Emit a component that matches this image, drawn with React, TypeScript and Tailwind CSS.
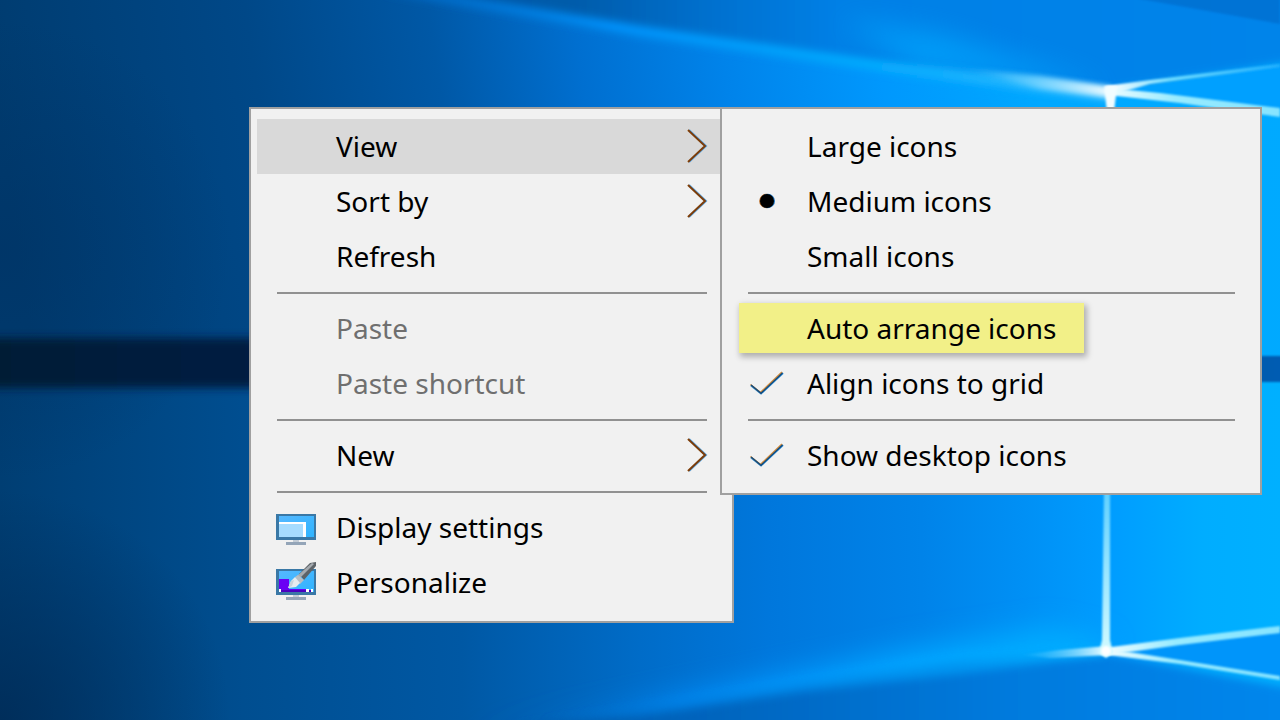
import type { ReactNode } from "react";

function Wallpaper() {
  return (
    <svg
      className="absolute inset-0 h-full w-full"
      viewBox="0 0 1280 720"
      preserveAspectRatio="xMidYMid slice"
      aria-hidden="true"
    >
      <defs>
        <linearGradient id="base" x1="0" y1="120" x2="1280" y2="-60" gradientUnits="userSpaceOnUse">
          <stop offset="0" stopColor="#003c70" />
          <stop offset="0.2" stopColor="#004888" />
          <stop offset="0.34" stopColor="#0058a6" />
          <stop offset="0.45" stopColor="#006fd0" />
          <stop offset="0.56" stopColor="#0083ea" />
          <stop offset="0.68" stopColor="#0098fd" />
          <stop offset="0.8" stopColor="#00a8ff" />
          <stop offset="1" stopColor="#00aaff" />
        </linearGradient>
        <linearGradient id="floor" x1="0" y1="0" x2="1280" y2="0" gradientUnits="userSpaceOnUse">
          <stop offset="0" stopColor="#003e73" />
          <stop offset="0.19" stopColor="#004e90" />
          <stop offset="0.36" stopColor="#0058a4" />
          <stop offset="0.5" stopColor="#006cc8" />
          <stop offset="0.6" stopColor="#0077dc" />
          <stop offset="0.72" stopColor="#0083e9" />
          <stop offset="0.8" stopColor="#0090f5" />
          <stop offset="0.87" stopColor="#009dff" />
          <stop offset="0.94" stopColor="#00adff" />
          <stop offset="1" stopColor="#00b0ff" />
        </linearGradient>
        <linearGradient id="sky" x1="400" y1="0" x2="1280" y2="0" gradientUnits="userSpaceOnUse">
          <stop offset="0" stopColor="#0052a0" />
          <stop offset="0.2" stopColor="#005cab" />
          <stop offset="0.35" stopColor="#0070ce" />
          <stop offset="0.5" stopColor="#0080e6" />
          <stop offset="1" stopColor="#0084ea" />
        </linearGradient>
        <linearGradient id="under" x1="500" y1="0" x2="1280" y2="0" gradientUnits="userSpaceOnUse">
          <stop offset="0" stopColor="#0059a8" />
          <stop offset="0.3" stopColor="#0066c0" />
          <stop offset="0.65" stopColor="#007add" />
          <stop offset="1" stopColor="#0086ec" />
        </linearGradient>
        <linearGradient id="beamTop" x1="400" y1="0" x2="1110" y2="90" gradientUnits="userSpaceOnUse">
          <stop offset="0" stopColor="#0077dc" stopOpacity="0.5" />
          <stop offset="0.3" stopColor="#0094ff" />
          <stop offset="0.65" stopColor="#00aeff" />
          <stop offset="0.85" stopColor="#2cbcff" />
          <stop offset="1" stopColor="#9ae4ff" />
        </linearGradient>
        <linearGradient id="beamLow" x1="450" y1="720" x2="1105" y2="650" gradientUnits="userSpaceOnUse">
          <stop offset="0" stopColor="#006fd0" stopOpacity="0" />
          <stop offset="0.35" stopColor="#008cf6" />
          <stop offset="0.7" stopColor="#00a4ff" />
          <stop offset="1" stopColor="#00b0ff" />
        </linearGradient>
        <linearGradient id="glintTop" x1="960" y1="0" x2="1110" y2="0" gradientUnits="userSpaceOnUse">
          <stop offset="0" stopColor="#55ccff" stopOpacity="0" />
          <stop offset="0.5" stopColor="#74d4ff" stopOpacity="0.8" />
          <stop offset="1" stopColor="#f0fbff" />
        </linearGradient>
        <linearGradient id="glintLow" x1="1020" y1="0" x2="1105" y2="0" gradientUnits="userSpaceOnUse">
          <stop offset="0" stopColor="#55ccff" stopOpacity="0" />
          <stop offset="1" stopColor="#e5faff" />
        </linearGradient>
        <linearGradient id="rayFade" x1="1110" y1="0" x2="1280" y2="0" gradientUnits="userSpaceOnUse">
          <stop offset="0" stopColor="#ffffff" />
          <stop offset="0.35" stopColor="#6fdcff" />
          <stop offset="1" stopColor="#22b0ff" />
        </linearGradient>
        <linearGradient id="rayBright" x1="1105" y1="0" x2="1280" y2="0" gradientUnits="userSpaceOnUse">
          <stop offset="0" stopColor="#f4feff" />
          <stop offset="0.4" stopColor="#98ebff" />
          <stop offset="1" stopColor="#86e4ff" />
        </linearGradient>
        <linearGradient id="bar" x1="0" y1="0" x2="1280" y2="0" gradientUnits="userSpaceOnUse">
          <stop offset="0" stopColor="#001a36" />
          <stop offset="0.2" stopColor="#001e42" />
          <stop offset="1" stopColor="#005cb2" />
        </linearGradient>
        <linearGradient id="pane" x1="0" y1="490" x2="0" y2="650" gradientUnits="userSpaceOnUse">
          <stop offset="0" stopColor="#5fd0ff" />
          <stop offset="1" stopColor="#d0faff" />
        </linearGradient>
        <radialGradient id="corner" cx="0" cy="720" r="230" gradientUnits="userSpaceOnUse">
          <stop offset="0" stopColor="#002a55" stopOpacity="0.8" />
          <stop offset="1" stopColor="#002a55" stopOpacity="0" />
        </radialGradient>
        <radialGradient id="dim" cx="0" cy="250" r="230" gradientUnits="userSpaceOnUse">
          <stop offset="0" stopColor="#003061" stopOpacity="0.5" />
          <stop offset="1" stopColor="#003061" stopOpacity="0" />
        </radialGradient>
        <filter id="soft1" x="-10%" y="-50%" width="120%" height="200%">
          <feGaussianBlur stdDeviation="1" />
        </filter>
        <filter id="soft2" x="-10%" y="-50%" width="120%" height="200%">
          <feGaussianBlur stdDeviation="2.5" />
        </filter>
        <filter id="soft4" x="-10%" y="-50%" width="120%" height="200%">
          <feGaussianBlur stdDeviation="4" />
        </filter>
        <filter id="soft14" x="-20%" y="-50%" width="140%" height="200%">
          <feGaussianBlur stdDeviation="14" />
        </filter>
      </defs>

      <rect width="1280" height="365" fill="url(#base)" />
      <rect y="365" width="1280" height="355" fill="url(#floor)" />
      <rect width="300" height="500" fill="url(#dim)" />
      <rect y="490" width="300" height="230" fill="url(#corner)" />

      <path d="M400 -20 L440 0 L620 32 L800 56 L1110 90 L1300 60 L1300 -20Z" fill="url(#sky)" filter="url(#soft4)" />
      <path d="M840 20 L940 36 L1110 88 L920 68Z" fill="#00a8ff" opacity="0.75" filter="url(#soft14)" />
      <path d="M1140 -1 L1280 24 L1280 -10 L1140 -10Z" fill="#006fd0" opacity="0.8" filter="url(#soft1)" />
      <path d="M380 -8 L440 -8 L640 26 L900 64 L1110 90 L1110 98 L890 72 L640 37Z" fill="url(#beamTop)" filter="url(#soft4)" />

      <path d="M1110 92 L1280 66 L1280 110Z" fill="#00a0ff" />
      <path d="M960 68 L1040 76 L1112 87 L1112 97 L1040 88Z" fill="url(#glintTop)" filter="url(#soft2)" />
      <path d="M1106 86 L1150 80 L1280 64 L1280 67 L1150 84 L1112 95Z" fill="url(#rayFade)" filter="url(#soft1)" />
      <path d="M1108 88 L1160 93 L1280 108 L1280 117 L1180 103 L1108 95Z" fill="url(#rayBright)" filter="url(#soft1)" />
      <path d="M1104 86 L1117 86 L1114 112 L1107 112Z" fill="#f2fdff" filter="url(#soft1)" />

      <path d="M440 740 L700 690 L900 650 L1050 628 L1105 642 L1105 660 L900 690 L560 724Z" fill="url(#beamLow)" filter="url(#soft14)" />
      <path d="M520 726 L640 708 L800 684 L960 662 L1105 654 L1300 690 L1300 750 L520 750Z" fill="url(#under)" filter="url(#soft4)" />
      <path d="M540 722 L800 676 L960 652 L1105 647 L1105 656 L960 674 L800 692 L640 716Z" fill="url(#beamLow)" opacity="0.6" filter="url(#soft4)" />
      <path d="M1105 651 L1280 629 L1280 679Z" fill="#0095fa" />
      <path d="M1020 655 L1060 650 L1108 646 L1108 655 L1050 658Z" fill="url(#glintLow)" filter="url(#soft1)" />
      <path d="M1104 648 L1180 638 L1280 626 L1280 633 L1180 645 L1108 655Z" fill="url(#rayBright)" filter="url(#soft1)" />
      <path d="M1104 648 L1180 660 L1280 676 L1280 680 L1180 664 L1108 655Z" fill="url(#rayBright)" filter="url(#soft1)" />
      <path d="M1104 490 L1110 490 L1110 640 L1113 653 L1106 658 L1099 653 L1102 640Z" fill="url(#pane)" filter="url(#soft1)" />
      <circle cx="1106" cy="651" r="5" fill="#ffffff" filter="url(#soft1)" />

      <rect x="-10" y="338" width="620" height="50" fill="url(#bar)" filter="url(#soft4)" />
      <rect x="700" y="356" width="600" height="26" fill="url(#bar)" filter="url(#soft1)" />
    </svg>
  );
}

function Chevron() {
  return (
    <svg className="h-9 w-6" viewBox="0 0 24 36" fill="none" aria-hidden="true">
      <path d="M5 2 L22 18 L5 34" stroke="#5aa9e8" strokeWidth="2" />
      <path d="M3 2 L20 18 L3 34" stroke="#fbe8c4" strokeWidth="1" />
      <path d="M4 2 L21 18 L4 34" stroke="#7a3c0c" strokeWidth="2" />
    </svg>
  );
}

function Check() {
  return (
    <svg className="h-6 w-9" viewBox="0 0 36 24" fill="none" aria-hidden="true">
      <path d="M2 14.5 L12 22.5 L34 2" stroke="#2f93dd" strokeWidth="2" />
      <path d="M1.5 13.5 L11.5 21.5 L33 1" stroke="#d18a3a" strokeWidth="1.6" />
      <path d="M2 14 L12 22.3 L33.5 2" stroke="#134a7c" strokeWidth="1.4" />
    </svg>
  );
}

function Dot() {
  return (
    <svg className="h-4 w-4" viewBox="0 0 16 16" aria-hidden="true">
      <circle cx="7.4" cy="8" r="7.2" fill="#b5651d" />
      <circle cx="8.8" cy="8" r="7.2" fill="#1c78c8" />
      <circle cx="8" cy="8" r="7" fill="#000000" />
    </svg>
  );
}

function MonitorBase() {
  return (
    <>
      <rect x="0" y="7" width="40" height="26" fill="#3a78a6" />
      <rect x="3" y="9" width="35" height="21" fill="url(#screen)" />
      <rect x="17" y="33" width="6" height="2" fill="#c3ccd6" />
      <rect x="10" y="35" width="20" height="3" fill="#94a5b8" />
      <defs>
        <linearGradient id="screen" x1="0" y1="0" x2="1" y2="1">
          <stop offset="0" stopColor="#55b8ff" />
          <stop offset="1" stopColor="#2fb4ff" />
        </linearGradient>
      </defs>
    </>
  );
}

function DisplayIcon() {
  return (
    <svg className="h-10 w-10" viewBox="0 0 40 40" aria-hidden="true">
      <MonitorBase />
      <rect x="3" y="15" width="27" height="15" fill="#ffffff" />
      <rect x="3" y="17" width="24" height="13" fill="#a6dcff" />
    </svg>
  );
}

function PersonalizeIcon() {
  return (
    <svg className="h-10 w-10" viewBox="0 0 40 40" aria-hidden="true">
      <MonitorBase />
      <path d="M3 17 H13 V27 H30 V30 H3Z" fill="#6a00f4" />
      <path d="M3 27 H5 V30 H3Z M30 27 H33 V30 H30Z M35 27 H37 V30 H35Z" fill="#ffffff" />
      <path d="M5 28 H30 V30 H5Z M33 28 H35 V30 H33Z" fill="#4a00c0" />
      <path d="M23 12 L34 1 L40 0 V4 L28 18Z" fill="#5d6368" />
      <path d="M21 14 L36 1 L38 2 L24 16Z" fill="#a6abb0" />
      <path d="M19 15 L22 13 L28 18 L24 22Z" fill="#b9bec3" />
      <path d="M19 15 L24 21 L20 25 L12 26 L15 19Z" fill="#e8ecef" />
      <path d="M12 26 L15 19 L18 18 L16 24Z" fill="#c9d4dc" />
    </svg>
  );
}

type ItemProps = {
  label: string;
  role?: "menuitem" | "menuitemradio" | "menuitemcheckbox";
  checked?: boolean;
  icon?: ReactNode;
  submenu?: boolean;
  active?: boolean;
  disabled?: boolean;
  marked?: boolean;
};

function Item({ label, role = "menuitem", checked, icon, submenu, active, disabled, marked }: ItemProps) {
  return (
    <button
      type="button"
      role={role}
      aria-checked={role === "menuitem" ? undefined : !!checked}
      aria-haspopup={submenu ? "menu" : undefined}
      aria-expanded={submenu ? !!active : undefined}
      disabled={disabled}
      className={`flex h-[55px] w-full items-center pb-[2px] text-left ${active ? "bg-[#d9d9d9]" : ""} ${
        disabled ? "text-[#6f6f6f]" : "text-black"
      }`}
    >
      <span
        className={`flex h-[50px] items-center ${
          marked ? "ml-[11px] bg-[#f2f088] pr-7 shadow-[2px_3px_6px_1px_rgba(0,0,0,0.28)]" : "grow"
        }`}
      >
        <span className={`flex shrink-0 items-center justify-center ${marked ? "w-[68px]" : "w-[77px] mr-[2px]"}`}>
          {icon}
        </span>
        <span className="whitespace-nowrap">{label}</span>
      </span>
      {submenu && (
        <span className="mr-6">
          <Chevron />
        </span>
      )}
    </button>
  );
}

function Separator() {
  return <div role="separator" className="mt-2 mr-[25px] mb-[7px] ml-5 h-[2px] bg-[#919191]" />;
}

export default function App() {
  return (
    <main className="relative min-h-screen overflow-hidden bg-[#0078d7] font-['Noto_Sans','Open_Sans',sans-serif] text-[28px] leading-9">
      <Wallpaper />
      <div
        role="menu"
        aria-label="Desktop"
        className="absolute top-[107px] left-[249px] w-[485px] border-2 border-[#a0a0a0] bg-[#f1f1f1] pt-[10px] pb-[11px] pl-[6px]"
      >
        <Item label="View" submenu active />
        <Item label="Sort by" submenu />
        <Item label="Refresh" />
        <Separator />
        <Item label="Paste" disabled />
        <Item label="Paste shortcut" disabled />
        <Separator />
        <Item label="New" submenu />
        <Separator />
        <Item label="Display settings" icon={<DisplayIcon />} />
        <Item label="Personalize" icon={<PersonalizeIcon />} />
      </div>
      <div
        role="menu"
        aria-label="View"
        className="absolute top-[107px] left-[720px] w-[542px] border-2 border-[#a0a0a0] bg-[#f1f1f1] py-[10px] pl-[6px]"
      >
        <Item role="menuitemradio" label="Large icons" />
        <Item role="menuitemradio" label="Medium icons" checked icon={<Dot />} />
        <Item role="menuitemradio" label="Small icons" />
        <Separator />
        <Item role="menuitemcheckbox" label="Auto arrange icons" marked />
        <Item role="menuitemcheckbox" label="Align icons to grid" checked icon={<Check />} />
        <Separator />
        <Item role="menuitemcheckbox" label="Show desktop icons" checked icon={<Check />} />
      </div>
    </main>
  );
}
